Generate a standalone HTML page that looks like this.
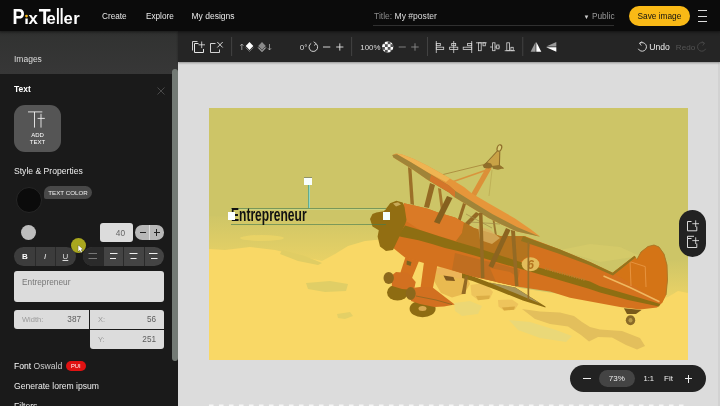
<!DOCTYPE html>
<html lang="en">
<head>
<meta charset="utf-8">
<title>PixTeller</title>
<style>
*{box-sizing:border-box;margin:0;padding:0}
html,body{width:720px;height:406px;overflow:hidden;background:#dcdcdc;font-family:"Liberation Sans",sans-serif;font-size:8px;color:#eee}
.abs{position:absolute}
body{will-change:transform}
#top{position:absolute;left:0;top:0;width:720px;height:31px;background:#0b0b0b;box-shadow:0 0 3px 1px rgba(0,0,0,.55);z-index:3}
#side{position:absolute;left:0;top:31px;width:178px;height:375px;background:#1a1a1a;overflow:hidden}
#side .imgrow{position:absolute;left:0;top:0;width:178px;height:43px;background:linear-gradient(#313231,#373737)}
#side .scroll{position:absolute;left:172px;top:38px;width:6px;height:292px;background:#737a75;border-radius:3px}
#tool{position:absolute;left:178px;top:31px;width:542px;height:31px;background:#252525;box-shadow:0 1px 2px rgba(0,0,0,.35);z-index:2}
#stage{position:absolute;left:178px;top:62px;width:542px;height:344px;background:#dcdcdc;overflow:hidden}
#poster{position:absolute;left:209px;top:108px;width:479px;height:251.5px;background:#cdc568;overflow:hidden}
.t{position:absolute;white-space:nowrap;line-height:1}
.box{position:absolute;background:#dcdcdc;border-radius:3px}
svg{position:absolute;overflow:visible}
</style>
</head>
<body>
<!-- ================= TOP BAR ================= -->
<div id="top">
  <svg id="logo" style="left:0;top:0" width="95" height="31" viewBox="0 0 95 31">
    <defs><clipPath id="istem"><rect x="20" y="18.6" width="12" height="8"/></clipPath></defs>
    <text y="23.9" font-family="'Liberation Sans',sans-serif" font-weight="bold" fill="#fff"><tspan x="12.6" font-size="21.6" textLength="12.1" lengthAdjust="spacingAndGlyphs">P</tspan><tspan x="24.3" font-size="16.6" clip-path="url(#istem)">i</tspan><tspan x="28.6" font-size="16.6" textLength="9.4" lengthAdjust="spacingAndGlyphs">x</tspan><tspan x="38.7" font-size="21.6" textLength="11.9" lengthAdjust="spacingAndGlyphs">T</tspan><tspan x="46.6" font-size="16.6">e</tspan><tspan x="56" font-size="21.6" textLength="3.8" lengthAdjust="spacingAndGlyphs">l</tspan><tspan x="59.7" font-size="21.6" textLength="3.8" lengthAdjust="spacingAndGlyphs">l</tspan><tspan x="63.6" font-size="16.6">e</tspan><tspan x="73.2" font-size="16.6">r</tspan></text>
    <circle cx="26.5" cy="16.1" r="1.4" fill="#f9b916"/>
  </svg>
  <div class="t" style="left:102px;top:12.5px;font-size:8.2px;color:#e8e8e8">Create</div>
  <div class="t" style="left:146px;top:12.5px;font-size:8.2px;color:#e8e8e8">Explore</div>
  <div class="t" style="left:191.5px;top:12px;font-size:8.5px;color:#e8e8e8">My designs</div>
  <div class="t" style="left:374px;top:12px;font-size:8.55px;color:#8a8a8a">Title: <span style="color:#ddd">My #poster</span></div>
  <div class="abs" style="left:373px;top:24.5px;width:241px;height:1px;background:#303030"></div>
  <div class="t" style="left:583.5px;top:12px;font-size:8.3px;color:#9a9a9a"><span style="color:#ccc;font-size:6px;vertical-align:0.5px">&#9660;</span><span style="margin-left:2.5px">Public</span></div>
  <div class="abs" style="left:629px;top:6px;width:61px;height:20px;border-radius:10px;background:#f9b916"></div>
  <div class="t" style="left:637.5px;top:12px;font-size:8.3px;color:#111">Save image</div>
  <div class="abs" style="left:698px;top:10px;width:8.5px;height:1px;background:#ddd"></div>
  <div class="abs" style="left:698px;top:15.5px;width:8.5px;height:1px;background:#ddd"></div>
  <div class="abs" style="left:698px;top:20.5px;width:8.5px;height:1px;background:#ddd"></div>
</div>
<!-- ================= SIDE PANEL ================= -->
<div id="side">
  <div class="imgrow"></div>
  <div class="scroll"></div>
  <div class="t" style="left:14px;top:24px;font-size:8.5px;color:#ddd">Images</div>
  <div class="t" style="left:14px;top:54px;font-size:8.5px;font-weight:bold;color:#fff">Text</div>
  <svg style="left:156.5px;top:55.5px" width="8" height="8" viewBox="0 0 8 8"><path d="M0.5 0.5L7.5 7.5M7.5 0.5L0.5 7.5" stroke="#555" stroke-width="0.8" fill="none"/></svg>
  <!-- add text button -->
  <div class="abs" style="left:14px;top:74px;width:47px;height:47px;border-radius:11px;background:#555"></div>
  <svg style="left:0;top:0" width="70" height="130" viewBox="0 31 70 130"><path d="M28 111.9H42.3M34.5 111.9V127.6M37.6 118.4H44.8M41 113.8V127.6" stroke="#eee" stroke-width="0.9" fill="none"/></svg>
  <div class="t" style="left:14px;top:100.5px;width:47px;text-align:center;font-size:6px;color:#fff;line-height:7.2px">ADD<br>TEXT</div>
  <div class="t" style="left:14px;top:136px;font-size:8.6px;color:#eee">Style &amp; Properties</div>
  <div class="abs" style="left:15.5px;top:155.5px;width:26px;height:26px;border-radius:50%;background:#0b0b0b;border:1px solid #262626"></div>
  <div class="abs" style="left:44px;top:155px;width:48px;height:13px;border-radius:6.5px 6.5px 6.5px 2px;background:#484848"></div>
  <div class="t" style="left:44px;top:158.5px;width:48px;text-align:center;font-size:6.2px;color:#eee">TEXT COLOR</div>
  <div class="abs" style="left:21px;top:194px;width:15px;height:15px;border-radius:50%;background:#bdbdbd"></div>
  <div class="box" style="left:100px;top:191.5px;width:33px;height:19.5px"></div>
  <div class="t" style="left:100px;top:197.5px;width:25px;text-align:right;font-size:8.3px;color:#666">40</div>
  <div class="abs" style="left:135px;top:194px;width:29px;height:14.5px;border-radius:7.25px;background:#b8b8b8"></div>
  <div class="abs" style="left:149.2px;top:194px;width:0.8px;height:14.5px;background:#ddd"></div>
  <div class="abs" style="left:139.5px;top:200.8px;width:6px;height:1px;background:#222"></div>
  <div class="abs" style="left:153.5px;top:200.8px;width:6.5px;height:1px;background:#222"></div>
  <div class="abs" style="left:156.3px;top:198px;width:1px;height:6.5px;background:#222"></div>
  <!-- B I U -->
  <div class="abs" style="left:14px;top:216px;width:62px;height:19px;border-radius:9.5px;background:#3c3c3c"></div>
  <div class="abs" style="left:34.5px;top:216px;width:1px;height:19px;background:#2a2a2a"></div>
  <div class="abs" style="left:55px;top:216px;width:1px;height:19px;background:#2a2a2a"></div>
  <div class="t" style="left:22px;top:221.5px;font-size:8px;font-weight:bold;color:#fff">B</div>
  <div class="t" style="left:44px;top:221.5px;font-size:8px;font-style:italic;color:#eee">I</div>
  <div class="t" style="left:62.5px;top:221.5px;font-size:8px;color:#ddd;text-decoration:underline">U</div>
  <!-- align -->
  <div class="abs" style="left:83px;top:216px;width:81px;height:19px;border-radius:9.5px;background:#444;overflow:hidden">
    <div class="abs" style="left:0;top:0;width:20px;height:19px;background:#2b2b2b"></div>
    <div class="abs" style="left:20px;top:0;width:1px;height:19px;background:#2a2a2a"></div>
    <div class="abs" style="left:40px;top:0;width:1px;height:19px;background:#2a2a2a"></div>
    <div class="abs" style="left:60.5px;top:0;width:1px;height:19px;background:#2a2a2a"></div>
  </div>
  <svg style="left:83px;top:216px" width="81" height="19" viewBox="0 0 81 19">
    <path d="M5.5 6.5H14M5.5 11.5H14" stroke="#777" stroke-width="1"/>
    <path d="M27 6.5H34.5M27 11.5H33" stroke="#eee" stroke-width="1"/>
    <path d="M46.5 6.5H54.5M47.5 11.5H53.5" stroke="#eee" stroke-width="1"/>
    <path d="M66 6.5H74.5M68 11.5H74.5" stroke="#eee" stroke-width="1"/>
  </svg>
  <!-- textarea -->
  <div class="box" style="left:14px;top:240px;width:150px;height:31px"></div>
  <div class="t" style="left:22px;top:246.5px;font-size:8.3px;color:#777">Entrepreneur</div>
  <!-- width / x / y -->
  <div class="box" style="left:14px;top:279px;width:75px;height:19px;border-radius:3px 0 0 3px"></div>
  <div class="box" style="left:90px;top:279px;width:74px;height:19px;border-radius:0 3px 0 0"></div>
  <div class="box" style="left:90px;top:299px;width:74px;height:19px;border-radius:0 0 3px 3px"></div>
  <div class="t" style="left:22px;top:285px;font-size:7.5px;color:#9a9a9a">Width:</div>
  <div class="t" style="left:50px;top:285px;width:31px;text-align:right;font-size:8.2px;color:#5c5c5c">387</div>
  <div class="t" style="left:98px;top:285px;font-size:7.5px;color:#9a9a9a">X:</div>
  <div class="t" style="left:125px;top:285px;width:31px;text-align:right;font-size:8.2px;color:#5c5c5c">56</div>
  <div class="t" style="left:98px;top:305px;font-size:7.5px;color:#9a9a9a">Y:</div>
  <div class="t" style="left:125px;top:305px;width:31px;text-align:right;font-size:8.2px;color:#5c5c5c">251</div>
  <div class="t" style="left:14px;top:330.5px;font-size:8.6px;color:#fff">Font <span style="color:#ccc">Oswald</span></div>
  <div class="abs" style="left:66px;top:330px;width:19.5px;height:9.5px;border-radius:5px;background:#e01212"></div>
  <div class="t" style="left:66px;top:332.6px;width:19.5px;text-align:center;font-size:5.8px;color:#fff">PUI</div>
  <div class="t" style="left:14px;top:351px;font-size:8.6px;color:#eee">Generate lorem ipsum</div>
  <div class="t" style="left:14px;top:371px;font-size:8.6px;color:#eee">Filters</div>
  <!-- cursor -->
  <div class="abs" style="left:71px;top:206.5px;width:15px;height:15px;border-radius:50%;background:#a9a71e"></div>
  <svg style="left:78px;top:214px" width="6" height="8" viewBox="0 0 6 8"><path d="M0.3 0.3V6.5L1.9 5L3 7.5L4 7L2.9 4.6H5Z" fill="#fff" stroke="#222" stroke-width="0.5" paint-order="stroke"/></svg>
</div>
<!-- ================= TOOLBAR ================= -->
<div id="tool">
<svg style="left:0;top:0" width="542" height="31" viewBox="178 31 542 31">
  <g fill="none" stroke="#e6e6e6" stroke-width="0.9">
    <!-- duplicate -->
    <path d="M198.5 43.5H194.5V52.5H203.5V49" stroke-width="1"/>
    <path d="M197.5 41.5H192.5V50.5" stroke="#ccc" stroke-width="1"/>
    <path d="M198.5 44.8H205M201.7 41.5V48.1" stroke-width="0.8"/>
    <!-- delete -->
    <path d="M215.5 43.5H210.5V52.5H219.5V49.5"/>
    <path d="M217.3 42L222.7 47.5M222.7 42L217.3 47.5"/>
    <!-- up arrow -->
    <path d="M241.8 50V44M240.2 45.8L241.8 44L243.4 45.8" stroke="#bbb" stroke-width="0.7"/>
    <path d="M269.5 44V50M267.9 48.2L269.5 50L271.1 48.2" stroke="#bbb" stroke-width="0.7"/>
    <!-- rotate -->
    <path d="M315.8 43.6A4.3 4.3 0 1 1 311.2 43.4"/>
    <path d="M313.6 41.8L316.2 43.6L314 45.6" stroke-width="0.8"/>
    <path d="M323 47H330.3M336.2 47H343.4M339.8 43.4V50.6"/>
    <!-- zoom -/+ dim -->
    <path d="M398.7 47H405.8M411.2 47H418.7M415 43.3V50.7" stroke="#8a8a8a"/>
    <!-- undo -->
    <path d="M639.8 43.3A4.3 4.3 0 1 1 638.3 48.8"/>
    <path d="M642.2 41.6L639.4 43.2L641.3 45.6" stroke-width="0.8"/>
    <!-- redo -->
    <path d="M704.2 43.3A4.3 4.3 0 1 0 705.7 48.8" stroke="#4a4a4a"/>
    <path d="M701.8 41.6L704.6 43.2L702.7 45.6" stroke="#4a4a4a" stroke-width="0.8"/>
  </g>
  <!-- separators -->
  <g fill="#4a4a4a">
    <rect x="231.3" y="37" width="0.8" height="19"/>
    <rect x="351.3" y="37" width="0.8" height="19"/>
    <rect x="427.2" y="37" width="0.8" height="19"/>
    <rect x="522.4" y="37" width="0.8" height="19"/>
  </g>
  <!-- diamonds -->
  <path d="M249.5 42L253.3 46L249.5 50L245.7 46Z" fill="#fff"/>
  <path d="M245.7 47.5L249.5 51.5L253.3 47.5" fill="none" stroke="#777" stroke-width="0.9"/>
  <path d="M262 42L265.8 46L262 50L258.2 46Z" fill="#8a8a8a"/>
  <path d="M258.2 47.5L262 51.5L265.8 47.5" fill="none" stroke="#eee" stroke-width="0.9"/>
  <!-- checker circle -->
  <defs>
    <pattern id="chk" x="382.1" y="41.4" width="5.6" height="5.6" patternUnits="userSpaceOnUse">
      <rect width="5.6" height="5.6" fill="#fff"/>
      <rect width="2.8" height="2.8" fill="#555"/>
      <rect x="2.8" y="2.8" width="2.8" height="2.8" fill="#555"/>
    </pattern>
  </defs>
  <circle cx="387.7" cy="47" r="5.7" fill="url(#chk)"/>
  <!-- align icons -->
  <g fill="none" stroke="#d8d8d8" stroke-width="0.8">
    <path d="M436.3 41V53"/>
    <rect x="436.3" y="43.4" width="4" height="2.3"/>
    <rect x="436.3" y="47.2" width="7.4" height="2.3"/>
    <path d="M453.7 41V53"/>
    <rect x="451.7" y="43.4" width="4" height="2.3"/>
    <rect x="449.6" y="47.2" width="8.2" height="2.3"/>
    <path d="M471.7 41V53"/>
    <rect x="467.6" y="43.4" width="4.1" height="2.3"/>
    <rect x="463.2" y="47.2" width="8.5" height="2.3"/>
    <path d="M476 42.8H486.7"/>
    <rect x="478.4" y="42.8" width="2.8" height="7.9"/>
    <rect x="483" y="42.8" width="2.3" height="3"/>
    <path d="M490 47H500"/>
    <rect x="492.6" y="42.8" width="2.4" height="7.9" fill="#232323"/>
    <rect x="496.7" y="45" width="2.3" height="3.8" fill="#232323"/>
    <path d="M504.7 50.7H515"/>
    <rect x="506.8" y="42.8" width="2.7" height="7.9"/>
    <rect x="510.9" y="47.3" width="2.3" height="3.4"/>
  </g>
  <!-- flip -->
  <path d="M535.6 42V51.7H530.6Z" fill="#9a9a9a"/>
  <path d="M536.3 42V51.7H541.3Z" fill="#fff"/>
  <path d="M546.2 46.6H556.3V42Z" fill="#9a9a9a"/>
  <path d="M546.2 47.3H556.3V51.7Z" fill="#fff"/>
  <g font-family="'Liberation Sans',sans-serif" font-size="8.3">
    <text x="299.8" y="49.8" fill="#ddd" font-size="8">0°</text>
    <text x="360.3" y="49.9" fill="#ddd" font-size="7.9">100%</text>
    <text x="649.2" y="50" fill="#eee" font-size="8.6">Undo</text>
    <text x="675.8" y="50" fill="#555" font-size="8.1">Redo</text>
  </g>
</svg>
</div>
<div id="stage"></div>
<div id="poster">
<svg style="left:0;top:0" width="479" height="251.5" viewBox="209 108 479 251.5">
  <defs>
    <linearGradient id="haze" x1="0" y1="0" x2="0" y2="1">
      <stop offset="0" stop-color="#cfc667"/>
      <stop offset="1" stop-color="#ead265"/>
    </linearGradient>
    <linearGradient id="haze2" x1="0" y1="0" x2="0" y2="1">
      <stop offset="0" stop-color="#cdc567"/>
      <stop offset="1" stop-color="#ecd366"/>
    </linearGradient>
  </defs>
  <!-- sky -->
  <rect x="209" y="108" width="479" height="252" fill="#cdc567"/>
  <!-- haze band -->
  <path d="M209 216 L260 218 L300 220 L340 222 L372 225 L400 230 L400 265 L209 265Z" fill="url(#haze)"/>
  <ellipse cx="262" cy="238" rx="22" ry="3" fill="#ecd566" opacity=".8"/>
  <path d="M560 250 L590 244 L620 247 L640 256 L600 262Z" fill="#d6cb6a" opacity=".8"/>
  <path d="M660 262 L688 258 L688 300 L660 300Z" fill="url(#haze2)"/>
  <!-- cloud yellow -->
  <path d="M209 249 L225 250 L250 247 L275 250 L300 256 L322 261 L335 254 L348 246 L365 241 L385 239 L400 243 L440 262 L520 288 L600 300 L655 302 L668 297 L678 291 L688 293 L688 360 L209 360Z" fill="#f9d866"/>
  <!-- olive streaks -->
  <path d="M282 250 L305 256 L322 263 L318 265 L298 261 L280 254Z" fill="#e0cd64"/>
  <path d="M306 283 L330 281 L348 284 L346 291 L325 292 L308 289Z" fill="#e0ce66"/>
  <path d="M337 314 L350 312 L353 316 L345 319 L338 318Z" fill="#e4d066"/>
  <!-- cloud shadows bottom right -->
  <path d="M454 303 L470 301 L482 306 L478 314 L462 316 L455 311Z" fill="#ecd774"/>
  <path d="M509 320 L530 322 L556 330 L572 336 L566 342 L540 338 L518 330Z" fill="#ead878"/>
  <path d="M522 309 L540 311.5 L560 312.5 L574 316 L582 322 L590 327 L600 329.5 L622 331 L640 338 L645 346 L637 349.5 L626 345 L612 337.5 L598 337 L589 341.5 L581 335 L568 326.5 L550 324 L535 319Z" fill="#e3bf5c"/>
  <!-- cream puffs under plane -->
  <path d="M434 268 L450 266 L466 272 L470 284 L464 294 L452 297.5 L441 293 L434 281Z" fill="#e9ba50"/>
  <path d="M436 268 L452 267 L464 273 L462 279 L446 276 L437 274Z" fill="#ecb458"/>
  <path d="M470.5 285 L480 283.5 L488 286 L493 292 L490 298.5 L478 300 L471.5 295Z" fill="#eec45c"/>
  <path d="M476 296 L490 295.5 L489 299 L478 300.3Z" fill="#dcae46"/>
  <path d="M498 300 L512 299.5 L518.5 304 L515 309.5 L504 310.5 L498.5 306.5Z" fill="#eec45c"/>
  <path d="M502 307.5 L515 306.5 L514 309.8 L504 310.6Z" fill="#d8a840"/>

  <!-- ============ PLANE ============ -->
  <g id="plane">
    <!-- mast / rig -->
    <path d="M470 196 L474.5 198.5 L491.5 168.5 L487 166Z" fill="#dc9038"/>
    <path d="M497.3 151 L499.8 151.3 L499.6 166 L484 166.5Z" fill="#c8983e" opacity=".8"/>
    <path d="M497.3 151 L483.5 166 M499.8 151.3 L499.4 165.5 L503.5 168.5" stroke="#8f6e2a" stroke-width="1.1" fill="none"/>
    <ellipse cx="499.4" cy="148" rx="2.2" ry="3.3" transform="rotate(18 499.4 148)" fill="#dcd078" stroke="#8f6e2a" stroke-width="1.2"/>
    <path d="M482.5 165 L487 162.2 L491 163.5 L493 167 L489 168.5 L484 168Z" fill="#8f6e2a"/>
    <path d="M492 166 L499 165 L503.5 168.3 L498 169.8 L493 168.8Z" fill="#94742c"/>
    <path d="M437 176 L484 164.5" stroke="#a98a3c" stroke-width="0.9" fill="none"/>
    <path d="M452 182 L488 169.5" stroke="#d9943c" stroke-width="1.6" fill="none"/>
    <path d="M492 170 L489 196" stroke="#b8a850" stroke-width="0.7" fill="none"/>
    <!-- interplane struts (behind fuselage) -->
    <path d="M408 167 L411.5 169 L414 205 L410.5 204Z" fill="#9c7028"/>
    <path d="M430 183 L435 185 L429 208 L424 207Z" fill="#946a24"/>
    <path d="M438 188 L441 189 L444 212 L441 211Z" fill="#a5782c"/>
    <path d="M463 203 L466 204 L459 226 L456 225Z" fill="#966a26"/>
    <path d="M476 212 L480 214 L466 228 L463 225Z" fill="#946a24"/>
    <path d="M492 216 L494 217 L497 236 L495 236Z" fill="#9c7830"/>
    <path d="M466 214 L492 228" stroke="#a08a48" stroke-width="0.7" fill="none"/>
    <path d="M470 222 L500 224" stroke="#a08a48" stroke-width="0.7" fill="none"/>
    <!-- lower wing (visible part) -->
    <path d="M462 272 L472.6 276.3 L489 282.6 L515.3 287.6 L545.5 306.5 L545.5 307.6 L522.8 300.5 L497.7 290.5 L472.6 281 L462 278Z" fill="#8e6c12"/>
    <path d="M489 282.6 L515.3 287.6 L540 303.5 L515 293Z" fill="#a89458"/>
    <!-- fuselage -->
    <path d="M404 203.2 L415.3 205.7 L427.8 208.8 L438 212.6 L455 217.6 L474 228 L500 236 L525 236.3 L560 249.5 L590 262 L612.7 272.8 L634.5 256 L637 259.5 L641 252 L648 246.5 L654 245 L659 247 L664 254 L667 265 L667.5 280 L666 295 L662 303 L657 307.5 L640 309.5 L620 307 L570 297.7 L550 291.4 L516.6 286.4 L473 276.5 L443 267.7 L423 262.7 L405 257.6 L392.6 247.6 L390 230Z" fill="#d4721e"/>
    <!-- upper-front fuselage highlight -->
    <path d="M404 203.2 L415.3 205.7 L427.8 208.8 L438 212.6 L455 217.6 L464 222.5 L462 233 L456 241 L440 236.5 L420 230 L406 221Z" fill="#da7a26"/>
    <!-- cockpit / cabane dark region -->
    <path d="M464 222.5 L474 228 L500 236 L525 236.3 L531 240 L528 256 L520 262 L505 257.5 L480 250 L460 243 L456 241 L462 233Z" fill="#b4741e"/>
    <path d="M478 226 L490 230 L500 238 L492 244 L480 240Z" fill="#d8b060" opacity=".8"/>
    <!-- belly mid darker -->
    <path d="M455 253 L480 259.5 L505 265.5 L520 270 L516.6 286.4 L473 276.5 L452 270Z" fill="#c06e20"/>
    <path d="M490 268 L510 272 L522 280 L516 286 L496 282Z" fill="#d4721e"/>
    <!-- tail fin lighter -->
    <path d="M634.5 256 L637 259.5 L641 252 L648 246.5 L654 245 L659 247 L664 254 L667 265 L667.5 280 L666 295 L662 303 L612.7 272.8Z" fill="#d47416"/>
    <path d="M630 260 L631 286 M645.2 266.4 L646 287 M631 262 L645 266.5" stroke="#eea050" stroke-width="0.7" fill="none"/>
    <path d="M637 259.5 L641 252 L648 246.5 L654 245 L659 247 L664 254 L667 265 L667.5 280 L666 295" stroke="#a87a28" stroke-width="0.9" fill="none"/>
    <!-- fuselage top dark edge -->
    <path d="M523 236.3 L560 249.5 L590 262 L612.7 272.8 L634.5 255.7 L635.8 257.3 L613 275.6 L589 265 L559 253.8 L530 244 L521 241Z" fill="#94741e"/>
    <!-- fuselage dark stripe -->
    <path d="M405 225.5 L420 230 L440 236.5 L460 242.7 L476 247.5 L505 257 L535 266.5 L590 281.5 L600 286.3 L630 295 L660.3 304 L659 306.5 L628 300 L600 292.6 L588 288.5 L535 273 L505 264.5 L476 256 L460 251.5 L445 248 L432 244 L418.5 240.2 L402 237 L398 236Z" fill="#8e6e12"/>
    <path d="M603.5 276 L630 287.5 L659.5 301.7" stroke="#efb860" stroke-width="1.5" fill="none"/>
    <path d="M545 268.5 L585 280" stroke="#b8802c" stroke-width="2.2" stroke-dasharray="1.2 1.3" fill="none"/>
    <!-- 6 logo -->
    <ellipse cx="530.5" cy="264.3" rx="8.8" ry="7" fill="#e3bc5a"/>
    <text x="527.3" y="268.6" font-family="'Liberation Sans',sans-serif" font-weight="bold" font-style="italic" font-size="12" fill="#b4741e">6</text>
    <!-- upper wing -->
    <path d="M392.5 155 L396 153.4 L402 154.6 L412.7 158.5 L427 165.5 L437 171 L450 178.5 L464 187 L472 193.5 L489 203.5 L515 218.5 L531 229.5 L540 236.5 L517 231.5 L501.5 224.5 L488.5 218 L480 212.7 L468 205.5 L455 197.6 L449 192.5 L427 179.5 L412.7 169.5 L393.4 157.5Z" fill="#e6963a"/>
    <path d="M396 153.4 L402 154.6 L412.7 158.5 L427 165.5 L437 171 L450 178.5 L446 182 L428 172.5 L411 162.5 L400 156Z" fill="#efb452"/>
    <path d="M392.3 155 L397 154.3 L411 162.3 L427 172 L449 185.5 L455 190.7 L476 204.1 L492.7 214.2 L517 227 L540 236.8 L517 231.5 L501.5 224.5 L488.5 218 L480 212.7 L468 205.5 L455 197.6 L449 192.5 L427 179.5 L412.7 169.5 L393.4 157.5Z" fill="#a08438"/>
    <path d="M431 175 L449 185.5 L455 190.7 L455 197.6 L449 192.5 L429.5 181Z" fill="#d4762a"/>
    <!-- front struts -->
    <path d="M447 196 L452.5 198 L439.5 224 L434 222Z" fill="#86601e"/>
    <path d="M479 213 L482.5 213 L484.5 278 L481 278Z" fill="#946a24"/>
    <path d="M506 228 L510.5 230 L493 268 L488.5 266Z" fill="#8c6420"/>
    <path d="M511 230 L515 231 L518.5 286 L515 286Z" fill="#946a24"/>
    <path d="M527.5 242 L529.2 242 L529.2 300 L527.5 300Z" fill="#9a7028"/>
    <path d="M465 276.3 L468 276.3 L465.5 294 L461.5 294Z" fill="#946a24"/>
    <path d="M443.4 275.5 L453.4 277 L455 281 L446 280.6Z" fill="#80581e"/>
    <!-- engine cowl -->
    <path d="M390.1 203.2 L396.4 200.7 L402.7 202.5 L404.6 207.6 L406.5 220 L405.2 224 L398.9 237.5 L393 250 L386 251 L380 246.5 L377.6 236.5 L378.8 230.2 L372.5 226.4 L370 219 L372.5 214 L376.3 212.6 L383.9 211.3 L388.9 205Z" fill="#926e12"/>
    <path d="M393 203.5 L398 202.3 L401 204.5 L396 206.5Z" fill="#c8aa58"/>
    <!-- landing gear legs -->
    <path d="M424 262 L437.5 264.5 L432.5 290 L420.5 288Z" fill="#d4721e"/>
    <path d="M405.5 257 L419 261 L410 283 L398 280Z" fill="#d4721e"/>
    <path d="M406.8 260.5 L411.5 262 L410.5 266 L406.5 264.5Z" fill="#7a6420"/>
    <!-- left wheel + pant -->
    <ellipse cx="397.5" cy="292.5" rx="10.5" ry="8" fill="#8e6c12"/>
    <path d="M391 276 L396 272 L408 273 L415.7 282 L414 290 L402 289 L392 286Z" fill="#d27020"/>
    <ellipse cx="388.7" cy="278" rx="5.2" ry="6" fill="#8c681c"/>
    <!-- right wheel + pant -->
    <ellipse cx="422.6" cy="308.8" rx="13" ry="8.5" fill="#8e6c12"/>
    <ellipse cx="422.5" cy="308.5" rx="4" ry="2.5" fill="#d8a850"/>
    <path d="M412 288 L420 286.9 L432 287 L454.7 304.5 L444 306.5 L434.5 307 L420 304 L411 301Z" fill="#d27020"/>
    <path d="M416 296 L436 300 L452 304.5" stroke="#9a6a20" stroke-width="1" fill="none"/>
    <ellipse cx="410.7" cy="293.5" rx="5" ry="6.5" fill="#8c681c"/>
    <!-- tail wheel -->
    <path d="M623.9 308.3 L641.5 310 L636 314 L627 314Z" fill="#7a5a1a"/>
    <ellipse cx="630.5" cy="320.2" rx="4.7" ry="5" fill="#8a6a28"/>
    <ellipse cx="630.5" cy="320.2" rx="2" ry="2.2" fill="#b89a48"/>
  </g>
</svg>

</div>
<!-- floating right pill -->
<div class="abs" style="left:679px;top:210px;width:27px;height:47px;border-radius:13.5px;background:#222"></div>
<!-- zoom bar -->
<div class="abs" style="left:569.5px;top:364.5px;width:136.5px;height:27px;border-radius:13.5px;background:#222"></div>
<div class="abs" style="left:598.5px;top:370px;width:36.5px;height:17px;border-radius:8.5px;background:#444"></div>
<div class="t" style="left:598.5px;top:374.5px;width:36.5px;text-align:center;font-size:8px;color:#eee">73%</div>
<div class="t" style="left:643.5px;top:374.5px;font-size:7.6px;color:#eee">1:1</div>
<div class="t" style="left:664px;top:374.5px;font-size:8px;color:#eee">Fit</div>
<div class="abs" style="left:583px;top:378px;width:7.5px;height:1px;background:#eee"></div>
<div class="abs" style="left:684.5px;top:378px;width:7.5px;height:1px;background:#eee"></div>
<div class="abs" style="left:687.7px;top:374.5px;width:1px;height:8px;background:#eee"></div>
<!-- selection box & text -->
<div class="abs" style="left:231px;top:208px;width:155px;height:1px;background:rgba(70,125,80,.62)"></div>
<div class="abs" style="left:231px;top:209px;width:155px;height:1px;background:rgba(205,230,160,.45)"></div>
<div class="abs" style="left:231px;top:224px;width:155px;height:1px;background:rgba(70,125,80,.62)"></div>

<div class="abs" style="left:308px;top:185px;width:1px;height:23px;background:#64aa8c"></div>
<div class="abs" style="left:309px;top:185px;width:1px;height:23px;background:#98d8be"></div>
<div class="t" id="ent" style="left:231.4px;top:206.2px;font-size:18.2px;font-weight:bold;color:#111;transform-origin:0 0;transform:scaleX(0.662)">Entrepreneur</div>
<div class="abs" style="left:304.3px;top:177.2px;width:8px;height:8px;background:#f8fffd;border-top:0.7px solid rgba(100,100,40,.7)"></div>
<div class="abs" style="left:228px;top:212.2px;width:7.2px;height:7.9px;background:#fcffff"></div>
<div class="abs" style="left:382.7px;top:212.3px;width:7.5px;height:7.5px;background:#f4ffff"></div>
<svg style="left:679px;top:210px" width="27" height="47" viewBox="679 210 27 47">
 <g fill="none" stroke="#eee" stroke-width="0.9">
  <path d="M691.5 221.5H687.5V230.8H696.8V226.5"/>
  <path d="M692.3 223.7H699M695.7 220.3V227" stroke-width="0.8"/>
  <path d="M691.5 238.5H687.5V247.5H696.8V243.5M687.5 238.5V236.3H694"/>
  <path d="M692.3 240.6H699M695.7 237.3V244" stroke-width="0.8"/>
 </g>
</svg>
<svg style="left:0;top:400px" width="720" height="6" viewBox="0 400 720 6"><path d="M209 405.3H688" stroke="#f6f6f6" stroke-width="1.6" stroke-dasharray="4.5 5.5" fill="none"/></svg>
<div class="abs" style="left:717.5px;top:62px;width:2.5px;height:344px;background:#d2d2d2"></div>

</body>
</html>
